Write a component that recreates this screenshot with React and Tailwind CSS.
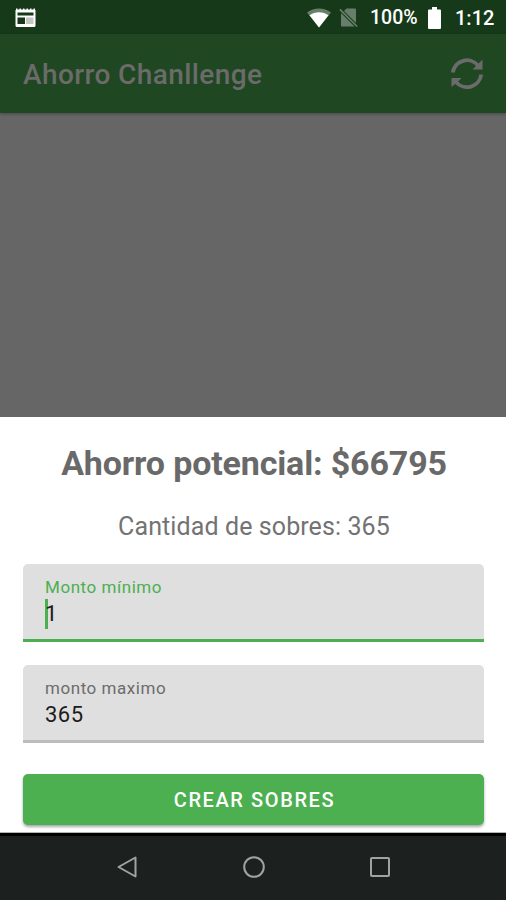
import clsx from 'clsx';

function StatusBar() {
  return (
    <div className="flex h-[34px] flex-shrink-0 items-center bg-[#16391a] pt-px text-white">
      <svg className="ml-[15px] h-[20px] w-[22px]" viewBox="0 0 22 20" aria-hidden="true">
        <path d="M1 0.500h1.500v1h2v-1h1.500v1h2v-1h1.500v1h2v-1h1.500v1h2v-1h1.500v1h2v-1h1.500v1.500h.5v15.500a1.500 1.500 0 0 1-1.500 1.500h-17A1.500 1.500 0 0 1 .5 17.500V2H1z" fill="#fff" />
        <path d="M2.500 4.500H18.500V7.500H2.500zM2.500 9.500H10v6.500H2.500z" fill="#16391a" />
        <path d="M11 9.500h7.500v6.500H11z" fill="#c3c8c4" />
      </svg>
      <svg className="ml-auto h-[20px] w-[24px]" viewBox="0 0 24 20" aria-hidden="true">
        <path d="M0 4.500C7 -1 17 -1 24 4.500L12 19.500z" fill="#fff" opacity=".35" />
        <path d="M2.500 7.200C8 3.300 16 3.300 21.500 7.200L12 19.500z" fill="#fff" />
      </svg>
      <svg className="ml-[8px] h-[20px] w-[19px]" viewBox="0 0 19 20" aria-hidden="true">
        <g fill="#fff" opacity=".35">
          <path d="M7.500 0.500H16a1 1 0 0 1 1 1v13.500L5 3z" />
          <path d="M2 5 15.500 18.500H3a1 1 0 0 1-1-1z" />
          <path d="M.3 1.900 1.500.700 18.700 17.900 17.500 19.100z" />
        </g>
      </svg>
      <span className="ml-[12px] w-[48px] pt-px text-[19.500px] leading-none font-medium whitespace-nowrap">100%</span>
      <svg className="ml-[10px] h-[22px] w-[13px]" viewBox="0 0 13 22" aria-hidden="true">
        <path d="M4 0h5v2.500h3a1 1 0 0 1 1 1V21a1 1 0 0 1-1 1H1a1 1 0 0 1-1-1V3.500a1 1 0 0 1 1-1h3z" fill="#fff" />
      </svg>
      <span className="mr-[12px] ml-[14px] w-[39px] text-[20px] leading-none font-medium whitespace-nowrap">1:12</span>
    </div>
  );
}

function Toolbar() {
  return (
    <header className="relative flex h-[79px] flex-shrink-0 items-center justify-between bg-[#1f4721] pr-[22px] pl-[23px] text-[#6b6b6b] shadow-[0_1px_3px_rgba(0,0,0,0.3)]">
      <h1 className="pt-[3px] text-[28px] leading-none font-medium tracking-[0.4px] whitespace-nowrap">
        Ahorro Chanllenge
      </h1>
      <button type="button" aria-label="Reiniciar">
        <svg className="h-[34px] w-[34px]" viewBox="0 0 34 34" fill="none" aria-hidden="true">
          <path d="M2.800 15.500A14.300 14.300 0 0 1 28 8.500M31.200 17.500A14.300 14.300 0 0 1 6 25" stroke="currentColor" strokeWidth="3.800" />
          <path d="M32.500 2.500V12.500H22.500L26 9zM1.500 30V21H11.500L8 24.500z" fill="currentColor" />
        </svg>
      </button>
    </header>
  );
}

function Field({ label, value, focused }) {
  return (
    <div
      className={clsx(
        'flex h-[78px] flex-col rounded-t-[5px] border-b-[3px] bg-[#dfdfdf] pl-[22px]',
        focused ? 'border-[#4caf50]' : 'border-[#bcbcbc]'
      )}
    >
      <span
        className={clsx(
          'mt-[13px] text-[17px] leading-[20px] tracking-[0.55px]',
          focused ? 'text-[#4caf50]' : 'text-[#6c6c6c]'
        )}
      >
        {label}
      </span>
      <div className="flex h-[33px] items-center text-[22px] leading-none tracking-[0.5px] text-[#1c1c1c]">
        {focused && <span className="-mr-[3px] h-[30px] w-[3px] bg-[#4caf50]" />}
        <span>{value}</span>
      </div>
    </div>
  );
}

function BottomSheet() {
  return (
    <section className="flex h-[416px] flex-shrink-0 flex-col border-b border-[#b5b5b5] bg-white pr-[22px] pl-[23px]">
      <h2 className="mt-[26px] pl-px text-center text-[34px] leading-[40px] font-bold tracking-[-0.15px] whitespace-nowrap text-[#696969]">
        Ahorro potencial: $66795
      </h2>
      <p className="mt-[28px] pl-px text-center text-[25px] leading-[32px] tracking-[0.1px] whitespace-nowrap text-[#737373]">
        Cantidad de sobres: 365
      </p>
      <div className="mt-[21px] flex flex-col gap-[23px]">
        <Field label="Monto mínimo" value="1" focused />
        <Field label="monto maximo" value="365" />
      </div>
      <button
        type="button"
        className="mt-[31px] h-[51px] flex-shrink-0 rounded-[5px] bg-[#4caf50] pl-[2px] text-[20px] font-medium tracking-[1.6px] text-white shadow-[0_2px_3px_rgba(0,0,0,0.35)]"
      >
        CREAR SOBRES
      </button>
    </section>
  );
}

function NavigationBar() {
  return (
    <nav className="flex flex-1 items-center justify-center gap-[104px] border-t-[3px] border-black bg-[#1c2120] pb-[2px] pl-px text-[#a0a3a3]">
      <svg className="h-[22px] w-[22px]" viewBox="0 0 22 22" fill="none" stroke="currentColor" strokeWidth="2" aria-hidden="true">
        <path d="M18.500 1.500v19L1.500 11z" strokeLinejoin="round" />
      </svg>
      <svg className="h-[22px] w-[22px]" viewBox="0 0 22 22" fill="none" stroke="currentColor" strokeWidth="2" aria-hidden="true">
        <circle cx="11" cy="11" r="9.800" />
      </svg>
      <svg className="h-[22px] w-[22px]" viewBox="0 0 22 22" fill="none" stroke="currentColor" strokeWidth="2" aria-hidden="true">
        <rect x="2" y="2" width="18" height="18" rx="1" />
      </svg>
    </nav>
  );
}

export default function App() {
  return (
    <div className="flex h-screen w-full flex-col overflow-hidden bg-[#666666] font-['Roboto',sans-serif]">
      <StatusBar />
      <Toolbar />
      <main className="flex-1" />
      <BottomSheet />
      <div className="flex h-[67px] flex-shrink-0">
        <NavigationBar />
      </div>
    </div>
  );
}
